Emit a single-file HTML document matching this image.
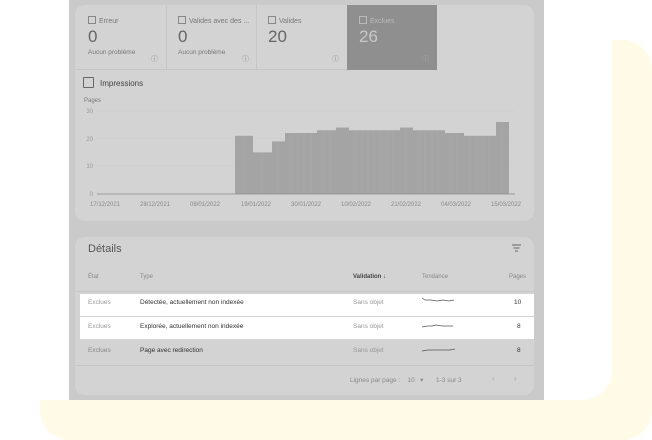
<html><head><style>
body{margin:0;width:652px;height:440px;background:#fff;position:relative;overflow:hidden;font-family:"Liberation Sans",sans-serif}
.abs{position:absolute}
.t{position:absolute;white-space:nowrap}
</style></head><body>
<div class="abs" style="left:40px;top:40px;width:612px;height:400px;background:#fffbe6;border-radius:30px"></div>
<div class="abs" style="left:0;top:0;width:612px;height:400px;background:#fff;border-bottom-right-radius:30px"></div>
<div class="abs" style="left:69px;top:0;width:475px;height:400px;background:#cacaca"></div>
<div class="abs" style="left:75px;top:5px;width:459px;height:216px;background:#d3d3d3;border-radius:10px;overflow:hidden">
 <div class="abs" style="left:0;top:0;width:91px;height:64px;border-right:1px solid #c6c6c6;border-bottom:1px solid #c6c6c6"></div>
 <div class="abs" style="left:91px;top:0;width:90px;height:64px;border-right:1px solid #c6c6c6;border-bottom:1px solid #c6c6c6"></div>
 <div class="abs" style="left:182px;top:0;width:90px;height:64px;border-bottom:1px solid #c6c6c6"></div>
 <div class="abs" style="left:272px;top:0;width:90px;height:65px;background:#8f8f8f"></div>
</div>
<div class="t" style="left:88px;top:16px;font-size:7px;color:#777"><span style="display:inline-block;width:6px;height:6px;border:1px solid #888;vertical-align:-1px;margin-right:3px"></span>Erreur</div>
<div class="t" style="left:88px;top:27px;font-size:17px;color:#666">0</div>
<div class="t" style="left:88px;top:49px;font-size:6.5px;color:#777">Aucun problème</div>
<div class="t" style="left:151px;top:54px;font-size:7px;color:#888">ⓘ</div>
<div class="t" style="left:178px;top:16px;font-size:7px;color:#777"><span style="display:inline-block;width:6px;height:6px;border:1px solid #888;vertical-align:-1px;margin-right:3px"></span>Valides avec des ...</div>
<div class="t" style="left:178px;top:27px;font-size:17px;color:#666">0</div>
<div class="t" style="left:178px;top:49px;font-size:6.5px;color:#777">Aucun problème</div>
<div class="t" style="left:242px;top:54px;font-size:7px;color:#888">ⓘ</div>
<div class="t" style="left:268px;top:16px;font-size:7px;color:#777"><span style="display:inline-block;width:6px;height:6px;border:1px solid #888;vertical-align:-1px;margin-right:3px"></span>Valides</div>
<div class="t" style="left:268px;top:27px;font-size:17px;color:#666">20</div>
<div class="t" style="left:332px;top:54px;font-size:7px;color:#888">ⓘ</div>
<div class="t" style="left:359px;top:16px;font-size:7px;color:#bbb"><span style="display:inline-block;width:6px;height:6px;border:1px solid #bbb;vertical-align:-1px;margin-right:3px"></span>Exclues</div>
<div class="t" style="left:359px;top:27px;font-size:17px;color:#c8c8c8">26</div>
<div class="t" style="left:422px;top:54px;font-size:7px;color:#aaa">ⓘ</div>
<div class="t" style="left:83px;top:77px;font-size:8px;color:#444"><span style="display:inline-block;width:9px;height:9px;border:1px solid #666;vertical-align:-2px;margin-right:6px;border-radius:1px"></span>Impressions</div>
<div class="t" style="left:84px;top:98px;font-size:6px;color:#777">Pages</div>
<svg class="abs" style="left:0;top:0" width="652" height="440">
 <g font-size="6" fill="#999" font-family="Liberation Sans" text-anchor="end">
  <text x="93" y="113">30</text><text x="93" y="141">20</text><text x="93" y="168">10</text><text x="93" y="196">0</text>
 </g>
 <g stroke="#cbcbcb" stroke-width=".6"><line x1="97" y1="111" x2="515" y2="111"/><line x1="97" y1="138.5" x2="515" y2="138.5"/><line x1="97" y1="166" x2="515" y2="166"/></g>
 <g fill="#a4a4a4">
  <rect x="235" y="135.8" width="18" height="58.2"/>
  <rect x="253" y="152.4" width="19" height="41.6"/>
  <rect x="272" y="141.4" width="13" height="52.6"/>
  <rect x="285" y="133" width="32" height="61"/>
  <rect x="317" y="130.3" width="19" height="63.7"/>
  <rect x="336" y="127.5" width="13" height="66.5"/>
  <rect x="349" y="130.3" width="51" height="63.7"/>
  <rect x="400" y="127.5" width="13" height="66.5"/>
  <rect x="413" y="130.3" width="32" height="63.7"/>
  <rect x="445" y="133" width="19" height="61"/>
  <rect x="464" y="135.8" width="32" height="58.2"/>
  <rect x="496" y="122" width="13" height="72"/>
 </g>
 <g stroke="#b0b0b0" stroke-width=".4"><path d="M244 136V194M262 152V194M278 141V194M291 133V194M298 133V194M304 133V194M311 133V194M323 130V194M330 130V194M355 130V194M362 130V194M368 130V194M374 130V194M381 130V194M387 130V194M393 130V194M406 128V194M419 130V194M425 130V194M432 130V194M438 130V194M451 133V194M457 133V194M470 136V194M477 136V194M483 136V194M489 136V194M502 122V194"/></g>
 <line x1="97" y1="194" x2="515" y2="194" stroke="#888" stroke-width=".7"/>
 <g font-size="6" fill="#888" font-family="Liberation Sans" text-anchor="middle">
  <text x="105" y="206">17/12/2021</text><text x="155" y="206">28/12/2021</text><text x="205" y="206">08/01/2022</text><text x="256" y="206">19/01/2022</text><text x="306" y="206">30/01/2022</text><text x="356" y="206">10/02/2022</text><text x="406" y="206">21/02/2022</text><text x="456" y="206">04/03/2022</text><text x="506" y="206">15/03/2022</text>
 </g>
 <g stroke="#666" stroke-width="1"><path d="M512 245h9M513.5 248h6M515 251h3"/></g>
</svg>
<div class="abs" style="left:75px;top:237px;width:459px;height:158px;background:#d3d3d3;border-radius:10px;z-index:-0"></div>
<svg class="abs" style="left:0;top:0" width="652" height="440"><g stroke="#666" stroke-width="1"><path d="M512 245h9M513.5 248h6M515 251h3"/></g></svg>
<div class="t" style="left:88px;top:243px;font-size:11px;color:#555">Détails</div>
<div class="t" style="left:88px;top:274px;font-size:6px;color:#888">État</div>
<div class="t" style="left:140px;top:274px;font-size:6px;color:#888">Type</div>
<div class="t" style="left:353px;top:274px;font-size:6px;color:#444;font-weight:bold">Validation ↓</div>
<div class="t" style="left:422px;top:274px;font-size:6px;color:#888">Tendance</div>
<div class="t" style="left:509px;top:274px;font-size:6px;color:#888">Pages</div>
<div class="abs" style="left:75px;top:291px;width:459px;height:1px;background:#c6c6c6"></div>
<div class="abs" style="left:80px;top:294px;width:454px;height:22px;background:#fff"></div>
<div class="abs" style="left:80px;top:317px;width:454px;height:22px;background:#fff"></div>
<div class="abs" style="left:75px;top:365px;width:459px;height:1px;background:#c6c6c6"></div>
<div class="t" style="left:88px;top:299px;font-size:6.5px;color:#999">Exclues</div>
<div class="t" style="left:140px;top:299px;font-size:6.5px;color:#333">Détectée, actuellement non indexée</div>
<div class="t" style="left:353px;top:299px;font-size:6.5px;color:#999">Sans objet</div>
<div class="t" style="left:514px;top:299px;font-size:6.5px;color:#333">10</div>
<div class="t" style="left:88px;top:323px;font-size:6.5px;color:#999">Exclues</div>
<div class="t" style="left:140px;top:323px;font-size:6.5px;color:#333">Explorée, actuellement non indexée</div>
<div class="t" style="left:353px;top:323px;font-size:6.5px;color:#999">Sans objet</div>
<div class="t" style="left:517px;top:323px;font-size:6.5px;color:#333">8</div>
<div class="t" style="left:88px;top:347px;font-size:6.5px;color:#888">Exclues</div>
<div class="t" style="left:140px;top:347px;font-size:6.5px;color:#333">Page avec redirection</div>
<div class="t" style="left:353px;top:347px;font-size:6.5px;color:#999">Sans objet</div>
<div class="t" style="left:517px;top:347px;font-size:6.5px;color:#333">8</div>
<svg class="abs" style="left:0;top:0" width="652" height="440" fill="none" stroke="#555" stroke-width=".7">
 <path d="M422 298l3 2 6 0 6 1 6-1 6 1 5-1"/>
 <path d="M422 327l6-1 4 0 4-1 6 1 6 0 5 0"/>
 <path d="M422 351l6-1 8 0 8 0 6 0 5-1"/>
</svg>
<div class="t" style="left:350px;top:376px;font-size:6.5px;color:#888">Lignes par page :&nbsp;&nbsp;&nbsp;&nbsp;10&nbsp;&nbsp;&nbsp;▾&nbsp;&nbsp;&nbsp;&nbsp;&nbsp;&nbsp;&nbsp;1-3 sur 3</div>
<div class="t" style="left:492px;top:374px;font-size:8px;color:#aaa">‹</div>
<div class="t" style="left:514px;top:374px;font-size:8px;color:#aaa">›</div>
</body></html>
